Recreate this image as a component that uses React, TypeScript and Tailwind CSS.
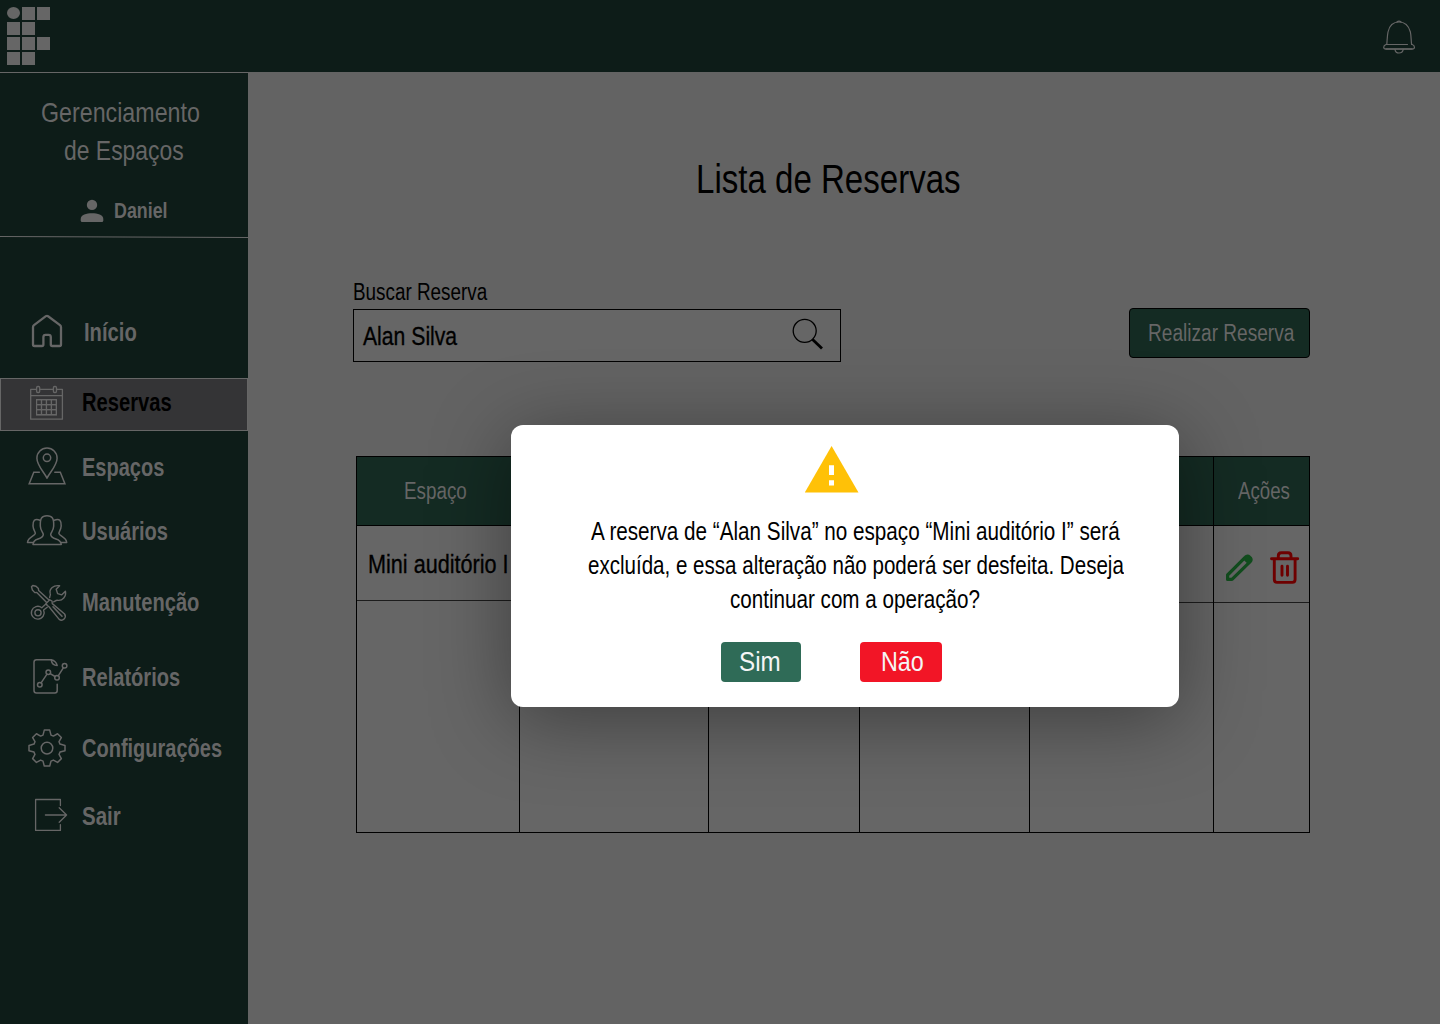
import { useLayoutEffect, useRef, useState } from "react";
import type { ReactNode } from "react";

/** Condensed text: one line squeezed horizontally to the given width. */
function Label({ width, className = "", children }: { width: number; className?: string; children: string }) {
  const ref = useRef<HTMLSpanElement>(null);
  const [scale, setScale] = useState(0.82);
  useLayoutEffect(() => {
    if (ref.current) setScale(width / ref.current.offsetWidth);
  }, [width, children]);
  return (
    <span className={`block shrink-0 whitespace-nowrap ${className}`} style={{ width }}>
      <span ref={ref} className="inline-block origin-left" style={{ transform: `scaleX(${scale})` }}>
        {children}
      </span>
    </span>
  );
}

function Logo() {
  const cells = [[1, 0], [2, 0], [0, 1], [1, 1], [0, 2], [1, 2], [2, 2], [0, 3], [1, 3]];
  return (
    <svg width="43" height="58" viewBox="0 0 43 58" fill="#666666">
      <ellipse cx="6.5" cy="6" rx="6.5" ry="6" />
      {cells.map(([c, r]) => (
        <rect key={`${c}-${r}`} x={c * 15} y={r * 15} width="13" height="13" />
      ))}
    </svg>
  );
}

function Icon({ view, w = 48, h = 48, sw = 1.2, children }: { view: string; w?: number; h?: number; sw?: number; children: ReactNode }) {
  return (
    <svg className="block shrink-0" width={w} height={h} viewBox={view} fill="none" stroke="#666666" strokeWidth={sw} strokeLinejoin="round" strokeLinecap="round">
      {children}
    </svg>
  );
}

function gearPath(cx: number, cy: number) {
  const points: string[] = [];
  for (let i = 0; i < 8; i++) {
    const a = (i * Math.PI) / 4;
    const outer = i % 2 === 0 ? 18 : 17.6;
    for (const [r, t] of [[13, -4], [outer, -2.7], [outer, 2.7], [13, 4]]) {
      points.push(`${(cx + r * Math.cos(a) - t * Math.sin(a)).toFixed(2)} ${(cy + r * Math.sin(a) + t * Math.cos(a)).toFixed(2)}`);
    }
  }
  return `M${points.join("L")}Z`;
}

const person = "M40 520.2C34.5 517.8 32.8 521 33 526C33.3 530.5 35.6 531.5 35.3 533.5C35 536 28 537 27.5 542.5H33.5";

const icons = {
  home: (
    <Icon view="24 309 48 48" sw={2.3}>
      <path d="M33 327.2Q33 325.9 34 325.1L45.9 316.2Q47 315.4 48.1 316.2L60 325.1Q61 325.9 61 327.2V344.5Q61 346 59.5 346H52.3Q50.8 346 50.8 344.5V337Q50.8 334.8 48.6 334.8H45.6Q43.4 334.8 43.4 337V344.5Q43.4 346 41.9 346H34.5Q33 346 33 344.5Z" />
    </Icon>
  ),
  calendar: (
    <Icon view="24 379 48 51" h={51} sw={1.3}>
      <path d="M36.5 389.3H30.7V419.2H62.4V389.3H56.7M39.8 389.3H53.2M30.7 395.6H62.4" />
      <rect x="36.6" y="386.5" width="3.1" height="6" rx="1.2" />
      <rect x="53.4" y="386.5" width="3.1" height="6" rx="1.2" />
      <rect x="36" y="399" width="21" height="16.6" fill="#666666" stroke="none" />
      {[0, 1, 2].map((r) =>
        [0, 1, 2, 3].map((c) => (
          <rect key={`${r}${c}`} x={37.2 + c * 4.95} y={400.4 + r * 5} width="3.6" height="3.6" fill="#343436" stroke="none" />
        )),
      )}
    </Icon>
  ),
  pin: (
    <Icon view="24 444 48 48" sw={1.5}>
      <path d="M47 478.2C45 473.5 36.9 465.5 36.9 458.2A10.1 10.1 0 0 1 57.1 458.2C57.1 465.5 49 473.5 47 478.2Z" />
      <circle cx="47" cy="457.8" r="3.7" />
      <path d="M39.3 472.3H33.8L29.2 483.7H64.9L60.3 472.3H54.8" strokeLinejoin="miter" />
    </Icon>
  ),
  users: (
    <Icon view="24 508 48 48" sw={1.5}>
      <path d="M33 544.4C33 541 35 540 38 539C41.5 537.8 43.3 536.5 43.3 534.5C43.3 532.5 40.5 531 40.3 526C40 519 41.5 515.7 47 515.7C52.5 515.7 54 519 53.7 526C53.5 531 50.7 532.5 50.7 534.5C50.7 536.5 52.5 537.8 56 539C59 540 61 541 61.3 544.4Z" />
      <path d={person} />
      <path d={person} transform="translate(94.2 0) scale(-1 1)" />
    </Icon>
  ),
  tools: (
    <Icon view="24 579 48 48" sw={1.4}>
      <path d="M49 600L38.6 590.4L38.4 588.6L36 586.2L32.8 585.5L31.5 586.8L32.4 590L34.8 592.6L36.8 592.4L46.4 602.2" />
      <path d="M47.3 605.5L46 603.5L49.8 599.8L52 601L52.3 603.6L64.6 614A3.9 3.9 0 0 1 59.2 619.4L49 606.7Z" />
      <path d="M53 606.8L62 616.2" strokeWidth="1.6" />
      <path d="M49.7 597.6C49.4 596 51 595.6 50.2 593.4C49 589 53.6 584.6 59.6 585.8L56.2 589.2L57.6 593.6L61.8 594.8L65.4 591.2C66.6 596.4 62.4 601 57.6 600.3C55.8 599.9 55 601.4 53.6 601.8" />
      <path d="M45.6 604.2L41.8 607.7A6.4 6.4 0 1 0 43.6 610L47.2 607.2" />
      <circle cx="38" cy="612.8" r="3.1" />
    </Icon>
  ),
  report: (
    <Icon view="24 654 48 48" sw={1.5}>
      <path d="M51.2 659.8H36.5Q34 659.8 34 662.3V690.4Q34 692.9 36.5 692.9H54.8Q57.2 692.9 57.2 690.4V684.3" />
      <path d="M51.2 659.8Q52 665.4 57.2 665.4Q56 661 51.2 659.8Z" />
      <circle cx="39.8" cy="684.7" r="2.3" />
      <circle cx="48.3" cy="672.3" r="2.3" />
      <circle cx="57" cy="677.7" r="2.3" />
      <circle cx="64.6" cy="665.8" r="2.3" />
      <path d="M41.1 682.8L47 674.2M50.2 673.6L55 676.5M58.2 675.8L63.3 667.8" />
    </Icon>
  ),
  gear: (
    <Icon view="24 725 48 48" sw={1.5}>
      <path d={gearPath(47, 748.1)} />
      <circle cx="47" cy="748.1" r="5.8" />
    </Icon>
  ),
  exit: (
    <Icon view="24 793 48 48" sw={1.3}>
      <path d="M60.4 805.5V799.5H35.6V830.4H60.4V824.6M45.4 815H66.6M59.2 807.7L66.6 815L59.2 822.3" />
    </Icon>
  ),
};

const items = [
  { label: "Início", icon: icons.home, width: 52.5, row: "mt-[71px] h-12", text: "ml-3 pb-0.5" },
  { label: "Reservas", icon: icons.calendar, width: 89.5, row: "mt-[21px] h-[53px]", text: "ml-2.5 pb-1.5", active: true },
  { label: "Espaços", icon: icons.pin, width: 82.5, row: "mt-[13px] h-12", text: "ml-2.5 pb-0.5" },
  { label: "Usuários", icon: icons.users, width: 86, row: "mt-4 h-12", text: "ml-2.5 pb-0.5" },
  { label: "Manutenção", icon: icons.tools, width: 117.5, row: "mt-[23px] h-12", text: "ml-2.5 pb-0.5" },
  { label: "Relatórios", icon: icons.report, width: 98, row: "mt-[27px] h-12", text: "ml-2.5 pb-0.5" },
  { label: "Configurações", icon: icons.gear, width: 140, row: "mt-[23px] h-12", text: "ml-2.5 pb-0.5" },
  { label: "Sair", icon: icons.exit, width: 38.5, row: "mt-5 h-12", text: "ml-2.5 pb-0.5" },
];

function Sidebar() {
  return (
    <aside className="flex h-[952px] w-[248px] shrink-0 flex-col border-t border-[#666666] bg-[#0d1c18] text-[#666666]">
      <div className="flex h-[163px] flex-col pt-[21px]">
        <Label width={158.5} className="ml-[41px] text-[28px] leading-[38px]">Gerenciamento</Label>
        <Label width={119.5} className="ml-[64px] text-[28px] leading-[38px]">de Espaços</Label>
        <div className="mt-[28px] flex items-center pl-[80px]">
          <svg width="24" height="24" viewBox="80 198 24 24" fill="#666666">
            <circle cx="92" cy="203.9" r="5.2" />
            <path d="M80.7 219.5V218C80.7 213.8 86.5 212.2 92 212.2S103.3 213.8 103.3 218V219.5Q103.3 221 101.8 221H82.2Q80.7 221 80.7 219.5Z" />
          </svg>
          <Label width={53.5} className="ml-[10px] text-[22px] font-bold leading-[26px]">Daniel</Label>
        </div>
      </div>
      <svg className="block shrink-0" width="248" height="2" stroke="#666666">
        <line x1="0" y1="0.5" x2="248" y2="1.5" />
      </svg>
      <nav className="flex flex-col">
        {items.map((it) => (
          <div
            key={it.label}
            className={`flex items-center ${it.row} ${it.active ? "border border-[#666666] bg-[#343436] pl-[23px] text-black" : "pl-6"}`}
          >
            {it.icon}
            <div className={it.text}>
              <Label width={it.width} className="text-[25px] font-bold leading-8">{it.label}</Label>
            </div>
          </div>
        ))}
      </nav>
    </aside>
  );
}

function ReservationsTable() {
  return (
    <div className="ml-[108px] mt-[94px] h-[377px] w-[954px] border border-black bg-[#666666]">
      <div className="grid h-full grid-cols-[163px_189px_151px_170px_184px_95px] grid-rows-[69px_75px_1fr]">
        <div className="flex items-center border-r border-b border-black bg-[#142b23] pl-[47px] text-[#666666]">
          <Label width={63} className="text-[23px] leading-8">Espaço</Label>
        </div>
        <div className="border-r border-b border-black bg-[#142b23]" />
        <div className="border-r border-b border-black bg-[#142b23]" />
        <div className="border-r border-b border-black bg-[#142b23]" />
        <div className="border-r border-b border-black bg-[#142b23]" />
        <div className="flex items-center border-b border-black bg-[#142b23] pl-[24px] text-[#666666]">
          <Label width={52} className="text-[23px] leading-8">Ações</Label>
        </div>

        <div className="flex items-center border-r border-b border-r-black border-b-[#1c1c1c] pl-[11px] pt-[2px]">
          <Label width={141} className="text-[25px] leading-8 [-webkit-text-stroke:0.3px_black]">Mini auditório I</Label>
        </div>
        <div className="border-r border-b border-black" />
        <div className="border-r border-b border-black" />
        <div className="border-r border-b border-black" />
        <div className="mb-[-2px] border-r border-b border-r-black border-b-[#1c1c1c]" />
        <div className="mb-[-2px] flex items-center gap-4 border-b border-[#1c1c1c] pl-[11px] pt-[7px]">
          <svg width="29" height="29" viewBox="1225 553 29 29" fill="none" stroke="#124d1e" strokeWidth="3.2" strokeLinejoin="round">
            <path d="M1227.6 579.4V575L1245.4 557.2Q1247.4 555 1249.4 557Q1252.4 559.4 1250.2 561.6L1232 579.4Z" />
            <path d="M1242.5 558.8L1248.4 564.6L1251 562V558L1248 555.8Z" fill="#124d1e" stroke="none" />
          </svg>
          <svg width="30" height="34" viewBox="1270 551 30 34" fill="none" stroke="#6e0000" strokeWidth="2.9" strokeLinecap="round" strokeLinejoin="round">
            <path d="M1271.5 558.7H1297.7M1274.3 558.7V579.6Q1274.3 582.4 1277 582.4H1292.4Q1295.1 582.4 1295.1 579.6V558.7M1278.3 558.7V556Q1278.3 552.8 1281.4 552.8H1288Q1291 552.8 1291 556V558.7M1282 566.2V575.2M1287.5 566.2V575.2" />
          </svg>
        </div>

        <div className="border-r border-black" />
        <div className="border-r border-black" />
        <div className="border-r border-black" />
        <div className="border-r border-black" />
        <div className="border-r border-black" />
        <div />
      </div>
    </div>
  );
}

function ConfirmDialog() {
  return (
    <div role="dialog" className="absolute left-[511px] top-[425px] flex h-[282px] w-[668px] flex-col rounded-xl bg-white shadow-[0_12px_80px_rgba(0,0,0,0.4)]">
      <svg className="ml-[293px] mt-[20px] block" width="56" height="48" viewBox="804 445 56 48">
        <path d="M831.6 446L858.5 492.6H804.8Z" fill="#ffc107" />
        <path d="M829 465.2H834V475H829ZM829 480.2H834V485.6H829Z" fill="#ffffff" />
      </svg>
      <div className="mt-[21px] text-[25px] leading-[34px]">
        <Label width={528.5} className="ml-[80px]">A reserva de “Alan Silva” no espaço “Mini auditório I” será</Label>
        <Label width={536} className="ml-[76.5px]">excluída, e essa alteração não poderá ser desfeita. Deseja</Label>
        <Label width={250} className="ml-[219px]">continuar com a operação?</Label>
      </div>
      <div className="ml-[210px] mt-[26px] flex gap-[59px] text-[28px] leading-[40px] text-[#f5f5f5]">
        <button className="flex h-10 w-20 rounded bg-[#2f6b57] pl-[18px]">
          <Label width={41.5}>Sim</Label>
        </button>
        <button className="flex h-10 w-[82px] rounded bg-[#f21526] pl-[20.5px]">
          <Label width={42.5}>Não</Label>
        </button>
      </div>
    </div>
  );
}

export default function App() {
  return (
    <div className="relative flex h-[1024px] w-[1440px] flex-col overflow-hidden bg-[#636363] font-['Liberation_Sans',Arial,sans-serif] text-black">
      <header className="flex h-[72px] shrink-0 justify-between bg-[#0d1c18] pl-[7px] pt-[7px] pr-[24px]">
        <Logo />
        <div className="pt-[12px]">
          <Icon view="1382 19 34 36" w={34} h={36} sw={1.2}>
            <path d="M1386.8 44.3C1387.2 40 1387.2 36 1388 32C1389.4 25.4 1393.6 22 1399 22S1408.6 25.4 1410.4 32C1411.2 36 1411 40 1411.6 44.3" />
            <path d="M1386.3 44.5H1407.5M1386 44.5Q1383.7 45.4 1383.7 47.2Q1383.7 49 1386 49H1412Q1414.5 49 1414.5 47.2Q1414.5 45.4 1411.8 44.3" />
            <path d="M1386 49H1412" strokeWidth="1.6" />
            <path d="M1397 21.8Q1399 20.4 1401 21.8M1395 49.6Q1395.6 53 1399 53T1403.2 49.6" />
          </Icon>
        </div>
      </header>
      <div className="flex">
        <Sidebar />
        <main className="flex flex-col">
          <Label width={264.5} className="ml-[448px] mt-[83px] text-[40px] leading-[48px]">Lista de Reservas</Label>
          <div className="ml-[105px] mt-[73px] flex w-[957px] items-end justify-between">
            <div>
              <Label width={134.5} className="-ml-[0.5px] pb-px text-[23px] leading-8">Buscar Reserva</Label>
              <div className="flex h-[53px] w-[488px] items-center justify-between border border-black bg-[#666666] pl-[9px] pr-[16px]">
                <Label width={94} className="pt-px text-[25px] leading-8 [-webkit-text-stroke:0.3px_black]">Alan Silva</Label>
                <svg className="mb-0.5" width="33" height="33" viewBox="791 318 33 33" fill="none" stroke="#000000">
                  <circle cx="804.7" cy="330.8" r="11.5" strokeWidth="1.3" />
                  <path d="M812.6 339.4L822 348.4" strokeWidth="2.8" />
                </svg>
              </div>
            </div>
            <button className="mb-1 flex h-[50px] w-[181px] items-center rounded border border-black bg-[#142b23] pl-[17.5px] text-[#666666]">
              <Label width={146} className="text-[23px] leading-8">Realizar Reserva</Label>
            </button>
          </div>
          <ReservationsTable />
        </main>
      </div>
      <ConfirmDialog />
    </div>
  );
}
